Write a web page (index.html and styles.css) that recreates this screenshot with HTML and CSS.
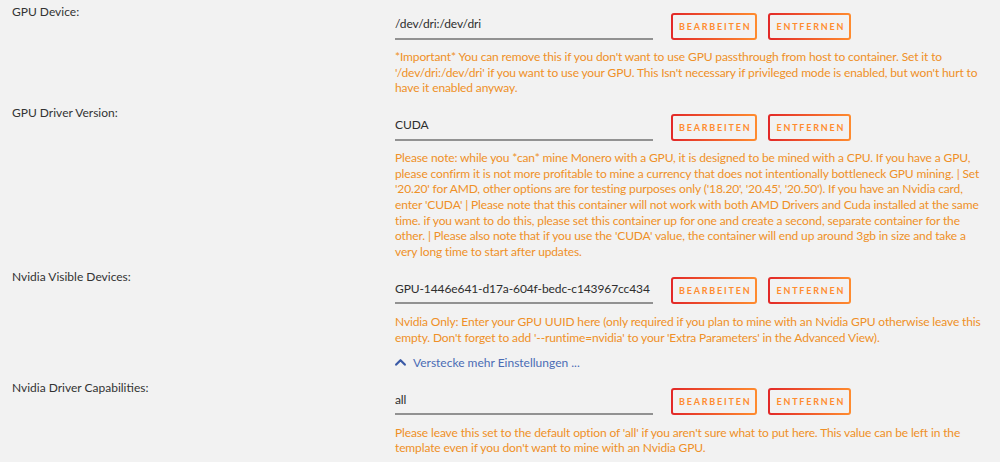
FILE: index.html
```html
<!DOCTYPE html>
<html lang="de">
<head>
<meta charset="utf-8">
<title>Container-Einstellungen</title>
<link rel="stylesheet" href="styles.css">
</head>
<body>
<main class="settings">
  <section class="setting">
    <div class="setting-label">GPU Device:</div>
    <div class="setting-body">
      <div class="setting-controls">
        <input class="setting-input" type="text" value="/dev/dri:/dev/dri">
        <button class="btn" type="button">Bearbeiten</button>
        <button class="btn" type="button">Entfernen</button>
      </div>
      <p class="setting-desc">*Important* You can remove this if you don't want to use GPU passthrough from host to container. Set it to '/dev/dri:/dev/dri' if you want to use your GPU. This Isn't necessary if privileged mode is enabled, but won't hurt to have it enabled anyway.</p>
    </div>
  </section>

  <section class="setting">
    <div class="setting-label">GPU Driver Version:</div>
    <div class="setting-body">
      <div class="setting-controls">
        <input class="setting-input" type="text" value="CUDA">
        <button class="btn" type="button">Bearbeiten</button>
        <button class="btn" type="button">Entfernen</button>
      </div>
      <p class="setting-desc">Please note: while you *can* mine Monero with a GPU, it is designed to be mined with a CPU. If you have a GPU, please confirm it is not more profitable to mine a currency that does not intentionally bottleneck GPU mining. | Set '20.20' for AMD, other options are for testing purposes only ('18.20', '20.45', '20.50'). If you have an Nvidia card,<br>enter 'CUDA' | Please note that this container will not work with both AMD Drivers and Cuda installed at the same time. if you want to do this, please set this container up for one and create a second, separate container for the<br>other. | Please also note that if you use the 'CUDA' value, the container will end up around 3gb in size and take a<br>very long time to start after updates.</p>
    </div>
  </section>

  <section class="setting">
    <div class="setting-label">Nvidia Visible Devices:</div>
    <div class="setting-body">
      <div class="setting-controls">
        <input class="setting-input" type="text" value="GPU-1446e641-d17a-604f-bedc-c143967cc434">
        <button class="btn" type="button">Bearbeiten</button>
        <button class="btn" type="button">Entfernen</button>
      </div>
      <p class="setting-desc">Nvidia Only: Enter your GPU UUID here (only required if you plan to mine with an Nvidia GPU otherwise leave this empty. Don't forget to add '--runtime=nvidia' to your 'Extra Parameters' in the Advanced View).</p>
      <a class="toggle-link" href="#">
        <svg class="toggle-icon" width="11" height="8" viewBox="0 0 11 8" aria-hidden="true"><polyline points="1.2,6.6 5.5,2.2 9.8,6.6" fill="none" stroke="currentColor" stroke-width="2.2" stroke-linecap="round" stroke-linejoin="round"/></svg>
        <span>Verstecke mehr Einstellungen ...</span>
      </a>
    </div>
  </section>

  <section class="setting">
    <div class="setting-label">Nvidia Driver Capabilities:</div>
    <div class="setting-body">
      <div class="setting-controls">
        <input class="setting-input" type="text" value="all">
        <button class="btn" type="button">Bearbeiten</button>
        <button class="btn" type="button">Entfernen</button>
      </div>
      <p class="setting-desc">Please leave this set to the default option of 'all' if you aren't sure what to put here. This value can be left in the template even if you don't want to mine with an Nvidia GPU.</p>
    </div>
  </section>
</main>
</body>
</html>
```

FILE: styles.css
```css
html, body {
  margin: 0;
  background: #f2f2f2;
}

body {
  font-family: Lato, "Open Sans", "Liberation Sans", sans-serif;
  color: #333;
}

.settings {
  padding: 4px 0 0 12px;
}

.setting {
  display: grid;
  grid-template-columns: 383px 1fr;
  margin-bottom: 9.5px;
}

.setting-label {
  font-size: 12px;
  line-height: 15.6px;
  color: #333;
}

.setting-controls {
  display: flex;
  align-items: flex-end;
  gap: 11px;
  margin-top: 8.5px;
}

.setting-input {
  box-sizing: border-box;
  width: 258px;
  height: 26px;
  margin: 0 7px 0 0;
  padding: 0 0 4px;
  border: 0;
  border-bottom: 2px solid #929292;
  background: transparent;
  font-family: inherit;
  font-size: 12px;
  letter-spacing: -0.1px;
  color: #2e2e2e;
  outline: none;
}

.btn {
  box-sizing: border-box;
  height: 27px;
  padding: 0 4px 0 6px;
  border: 2px solid transparent;
  border-radius: 3px;
  background:
    linear-gradient(#f2f2f2, #f2f2f2) padding-box,
    linear-gradient(90deg, #e22828 0%, #ff8c2f 100%) border-box;
  font-family: inherit;
  font-size: 9px;
  font-weight: 700;
  letter-spacing: 1.8px;
  text-transform: uppercase;
  color: #ff8c2f;
  cursor: pointer;
}

.setting-desc {
  max-width: 600px;
  margin: 9.5px 0 0;
  font-size: 12px;
  line-height: 15.6px;
  letter-spacing: -0.13px;
  color: #ef9027;
}

.toggle-link {
  display: flex;
  align-items: center;
  gap: 7px;
  margin-top: 9.5px;
  font-size: 12px;
  line-height: 15.6px;
  color: #4a6cb5;
  text-decoration: none;
}

.toggle-icon {
  color: #3a5aa6;
}
```
